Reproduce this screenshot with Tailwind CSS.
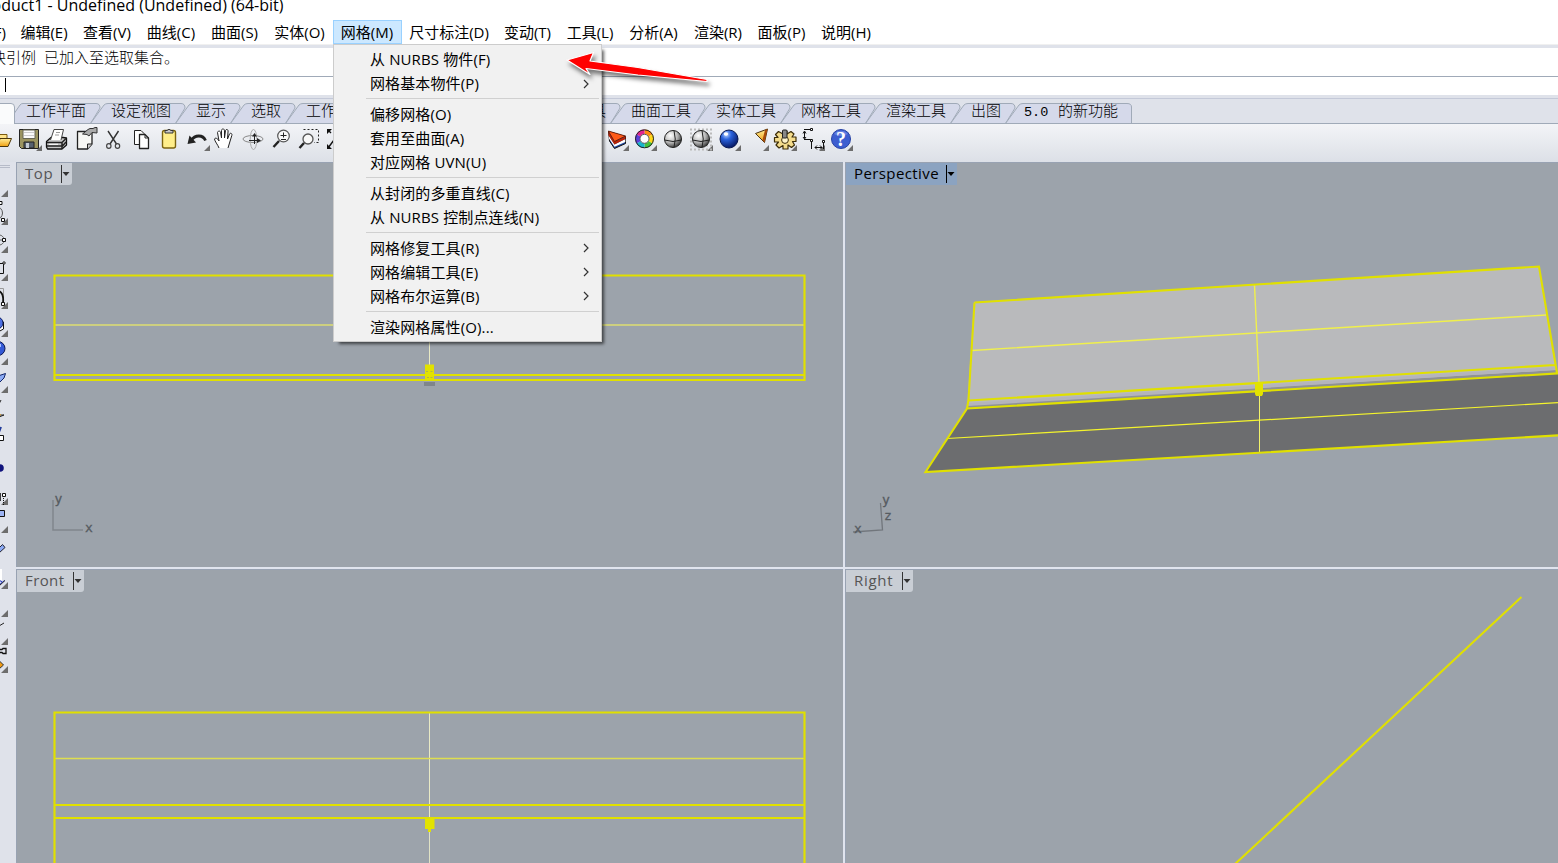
<!DOCTYPE html>
<html lang="zh">
<head>
<meta charset="utf-8">
<title>Product1 - Undefined</title>
<script src="https://cdn.jsdelivr.net/npm/@tailwindcss/browser@4"></script>
</head>
<body class="w-[1558px] h-[863px] overflow-hidden relative flex flex-col bg-white text-black font-['Open_Sans','Noto_Sans_CJK_SC',sans-serif] text-[15px]">

<!-- title -->
<header class="h-5 shrink-0 overflow-hidden flex items-start"><span class="-ml-[15px] -mt-[6px] leading-[22px] text-[16px] whitespace-nowrap">roduct1 - Undefined (Undefined) (64-bit)</span></header>

<!-- menu bar -->
<nav class="h-6 shrink-0 flex leading-[25px] text-[15px] whitespace-nowrap">
  <div class="w-[13px] flex justify-end pr-[7px]">(F)</div>
  <div class="w-[62px] text-center">编辑(E)</div>
  <div class="w-[64px] text-center">查看(V)</div>
  <div class="w-[64px] text-center">曲线(C)</div>
  <div class="w-[63px] text-center">曲面(S)</div>
  <div class="w-[67px] text-center">实体(O)</div>
  <div class="w-[69px] text-center bg-[#cce8ff] border border-[#99d1ff] leading-[23px] pr-px">网格(M)</div>
  <div class="w-[94px] text-center">尺寸标注(D)</div>
  <div class="w-[63px] text-center">变动(T)</div>
  <div class="w-[62px] text-center">工具(L)</div>
  <div class="w-[65px] text-center">分析(A)</div>
  <div class="w-[64px] text-center">渲染(R)</div>
  <div class="w-[63px] text-center">面板(P)</div>
  <div class="w-[66px] text-center">说明(H)</div>
</nav>

<!-- command area -->
<section class="h-[54px] shrink-0 flex flex-col font-['Liberation_Mono','Noto_Sans_CJK_SC',monospace]">
  <div class="h-1 bg-[#dfe2ea] border-t border-[#f0f0f0]"></div>
  <div class="h-7 leading-6 text-[15px] font-light whitespace-pre overflow-hidden"><span class="-ml-[9px]">块引例</span><span class="inline-block w-[8px]"></span>已加入至选取集合。</div>
  <div class="h-px bg-[#a0aab8]"></div>
  <div class="h-[18px] pl-[5px] pt-px"><div class="w-px h-[14px] bg-black"></div></div>
  <div class="h-[3px] bg-[#dfe2ea]"></div>
</section>

<!-- tabs -->
<section class="h-[26px] shrink-0 relative bg-[#dfe2ea]">
  <svg class="absolute inset-0" width="1558" height="26" fill="#d5d9ea" stroke="#a0aab8">
    <path d="M0 0.5H1558" stroke="#c4c9d8"/>
    <path d="M14.500 25.500V15L20 7Q21 5.500 23 5.500H96Q100 5.500 100 10L90.500 25.500Z"/>
    <path d="M90.500 25.500L104 7Q105.500 5.500 108 5.500H181Q185 5.500 185 10L175.500 25.500Z"/>
    <path d="M175.500 25.500L189 7Q190.500 5.500 193 5.500H236Q240 5.500 240 10L230.500 25.500Z"/>
    <path d="M230.500 25.500L244 7Q245.500 5.500 248 5.500H291Q295 5.500 295 10L285.500 25.500Z"/>
    <path d="M285.500 25.500L299 7Q300.500 5.500 303 5.500H616Q620 5.500 620 10L610.500 25.500Z"/>
    <path d="M610.500 25.500L624 7Q625.500 5.500 628 5.500H701Q705 5.500 705 10L695.500 25.500Z"/>
    <path d="M695.500 25.500L709 7Q710.500 5.500 713 5.500H786Q790 5.500 790 10L780.500 25.500Z"/>
    <path d="M780.500 25.500L794 7Q795.500 5.500 798 5.500H871Q875 5.500 875 10L865.500 25.500Z"/>
    <path d="M865.500 25.500L879 7Q880.500 5.500 883 5.500H956Q960 5.500 960 10L950.500 25.500Z"/>
    <path d="M950.500 25.500L964 7Q965.500 5.500 968 5.500H1011Q1015 5.500 1015 10L1005.500 25.500Z"/>
    <path d="M1005.500 25.500L1019 7Q1020.500 5.500 1023 5.500H1127Q1131.500 5.500 1131.500 9V25.500Z"/>
    <path d="M14 25.500H1558" />
    <path d="M-2 27V5.500H11Q14.500 5.500 14.500 9V27" fill="#fafbfc"/>
  </svg>
  <div class="relative flex pl-[26px] h-[26px] pt-[5px] leading-5 text-[15px] font-light whitespace-nowrap font-['Liberation_Mono','Noto_Sans_CJK_SC',monospace]">
    <span class="w-[85px]">工作平面</span><span class="w-[85px]">设定视图</span><span class="w-[55px]">显示</span><span class="w-[55px]">选取</span><span class="w-[240px]">工作</span><span class="w-[85px]">曲线工具</span><span class="w-[85px]">曲面工具</span><span class="w-[85px]">实体工具</span><span class="w-[85px]">网格工具</span><span class="w-[85px]">渲染工具</span><span class="w-[53px]">出图</span><span class="flex"><span class="w-[34px] text-[13.5px]">5.0</span>的新功能</span>
  </div>
</section>

<!-- toolbar -->
<section class="h-[38px] shrink-0 bg-linear-to-b from-[#f3f4f7] to-[#dce0e7]">
<svg width="900" height="38" viewBox="0 124 900 38" fill="none" stroke-linejoin="round">
  <defs>
    <radialGradient id="gb" cx=".35" cy=".25" r=".8"><stop offset="0" stop-color="#bcd4ff"/><stop offset=".35" stop-color="#2a62dd"/><stop offset="1" stop-color="#04135c"/></radialGradient>
    <radialGradient id="gg" cx=".35" cy=".3" r=".8"><stop offset="0" stop-color="#fff"/><stop offset=".5" stop-color="#bbb"/><stop offset="1" stop-color="#222"/></radialGradient>
    <linearGradient id="gy" x1="0" y1="0" x2="0" y2="1"><stop offset="0" stop-color="#ffee9a"/><stop offset="1" stop-color="#f0a010"/></linearGradient>
  </defs>
  <g fill="#6d6d6d">
    <path d="M42 145v6h-6zM210 145v6h-6zM629 145v6h-6zM657 145v6h-6zM713 145v6h-6zM741 145v6h-6zM769 145v6h-6zM797 145v6h-6zM825 145v6h-6zM853 145v6h-6z"/>
  </g>
  <!-- open -->
  <path d="M-3 146V134.500H7V138" fill="#ffe48a" stroke="#7a5a10"/><path d="M-2 146.500H8L11.500 138.500H0Z" fill="url(#gy)" stroke="#4a3508"/>
  <!-- save -->
  <path d="M19.500 129.500H38.500V148.500H21.500L19.500 146.500Z" fill="#9b9460" stroke="#222"/><path d="M23 130H35V138.500H23Z" fill="#fafafa" stroke="#665"/><path d="M24 132.500H34M24 135.500H34" stroke="#ccc"/><path d="M24 142H34V148H24Z" fill="#56606e" stroke="#222"/><path d="M26 143h3v5h-3z" fill="#c4cbd4"/>
  <!-- print -->
  <path d="M46.500 141.500L51 137.500H63L66.500 138V145L62 149H47.500L46.500 147Z" fill="#c8c8c8" stroke="#111" stroke-width="1.300"/><path d="M50.500 140L54 129.500H63.500L61 140" fill="#fff" stroke="#444"/><path d="M56 132.500H60M55 135H59" stroke="#999"/><path d="M47 142.500H62L66 138.500M47 146H62.500L66 142M62 142V149" stroke="#222" stroke-width="1.500"/><path d="M49 144.300H58" stroke="#fff"/>
  <!-- document properties -->
  <path d="M77.500 131.500H92V144L87.500 149H77.500Z" fill="#f7f7f4" stroke="#222" stroke-width="1.300"/><path d="M87.500 149V144H92" stroke="#222" fill="#ccc"/><path d="M82.500 134L88 129.500L90 128.500H93L95 127.500H97V133L92 132.500L89 136L87 134.500Z" fill="#aaa" stroke="#333"/>
  <!-- cut -->
  <path d="M108 131L116.500 144M118.500 131L110 144" stroke="#333" stroke-width="1.400"/><ellipse cx="108.800" cy="146" rx="2.200" ry="2.300" stroke="#444" stroke-width="1.200"/><ellipse cx="117.500" cy="146" rx="2.200" ry="2.300" stroke="#444" stroke-width="1.200"/>
  <!-- copy -->
  <path d="M134.500 130.500H141L144 133.500V144.500H134.500Z" fill="#fff" stroke="#222"/><path d="M139.500 134.500H145L148.500 138V148.500H139.500Z" fill="#fff" stroke="#222" stroke-width="1.300"/><path d="M145 134.500V138H148.500" stroke="#222"/>
  <!-- paste -->
  <rect x="162.500" y="130.500" width="13" height="17.500" rx="2" fill="#ffee8a" stroke="#7c6410" stroke-width="1.400"/><path d="M165 133V130.500H167Q169 128 171 130.500H173V133Z" fill="#c9c9c9" stroke="#333"/>
  <!-- undo -->
  <path d="M191 140.500C195 134.500 203 134.500 205.500 140.500" stroke="#222" stroke-width="2.800"/><path d="M187.500 144L189.500 135.500L196 142.500Z" fill="#222"/>
  <!-- pan -->
  <path d="M219 148C218 145 214.500 141 214.500 139C215.500 137 218 139 219 141L217.500 132.500C218.500 130 220.500 131 220.700 133L221.500 138V130.500C222 128 224.500 128.500 224.500 131V138L225.500 130.500C226.500 128.500 228.500 129.500 228 132L227.500 139L229.500 134C230.500 132.500 232.500 133.500 231.800 135.500L229.500 143L228 148" fill="#fff" stroke="#222"/>
  <!-- rotate view -->
  <ellipse cx="253" cy="139" rx="10" ry="3.500" stroke="#8a8a8a"/><ellipse cx="253.500" cy="139.500" rx="3.300" ry="10" stroke="#aaa"/><path d="M249 140.500H259M254.500 134V144" stroke="#222"/><path d="M257 138L261 140.500L257 143ZM252 136.500L254.500 133L257 136.500Z" fill="#222"/>
  <!-- zoom -->
  <circle cx="283.500" cy="136" r="5.800" fill="#f8f8f8" stroke="#555" stroke-width="1.200"/><path d="M280.500 135.500H286.500M283.500 132.500V137.500M281 139.500H286" stroke="#222"/><path d="M279 141L273.500 147" stroke="#222" stroke-width="2.400"/>
  <!-- zoom window -->
  <path d="M303.500 129.500H318.500V142.500H314" stroke="#222" stroke-dasharray="2 2"/><circle cx="308" cy="139" r="5" fill="#f8f8f8" stroke="#555" stroke-width="1.300"/><path d="M304 143L299.500 148" stroke="#222" stroke-width="2.400"/>
  <!-- zoom extents -->
  <path d="M327 129H332L327 134ZM327 149V144L332 149Z" fill="#111"/><path d="M328 148L334 140M328 130L331 133" stroke="#111" stroke-width="1.400"/>
  <!-- layers -->
  <path d="M608.500 131.500L625.500 136.500V143.500L614.500 148.500L609.500 141Z" fill="#1f4aa8" stroke="#111"/><path d="M608.800 135.500L614.500 144.500L625.300 139V142L614.500 146.800L609 138.500Z" fill="#fff"/><path d="M608.500 131.500L614.500 141.500L625.500 136.500V139L614.500 144.500L608.500 135.500Z" fill="#b92408"/><path d="M608.300 131L625.500 136L614.500 141.500Z" fill="#ff5a18" stroke="#5c1606" stroke-width=".8"/>
  <!-- colour wheel -->
  <g stroke-width="4.500"><path d="M644.500 131.800A7 7 0 0 1 650.560 135.300" stroke="#ff8a10"/><path d="M650.560 135.300A7 7 0 0 1 650.560 142.300" stroke="#ffd818"/><path d="M650.560 142.300A7 7 0 0 1 644.500 145.800" stroke="#44c33c"/><path d="M644.500 145.800A7 7 0 0 1 638.440 142.300" stroke="#18b5cc"/><path d="M638.440 142.300A7 7 0 0 1 638.440 135.300" stroke="#5a3fd8"/><path d="M638.440 135.300A7 7 0 0 1 644.500 131.800" stroke="#e02590"/></g><circle cx="644.500" cy="138.800" r="9" stroke="#222"/><circle cx="644.500" cy="138.800" r="4.500" stroke="#333" fill="#fff" stroke-width=".8"/>
  <!-- shaded spheres -->
  <circle cx="673" cy="139" r="8.500" fill="url(#gg)" stroke="#222"/><path d="M664.500 140Q673 143 681.500 140M674 130.500Q676.500 139 674 147.500" stroke="#222"/>
  <path d="M690 129.500H712M690 133.500H712M690 137.500H712M690 141.500H712M690 145.500H712M690 149.500H712" stroke="#bbb" stroke-width="2" stroke-dasharray="2 2"/><circle cx="701" cy="139" r="8.500" fill="url(#gg)" stroke="#222"/><path d="M692.500 140Q701 143 709.500 140M702 130.500Q704.500 139 702 147.500" stroke="#222"/>
  <circle cx="729" cy="139" r="9" fill="url(#gb)" stroke="#081850"/><ellipse cx="726" cy="134" rx="2.200" ry="1.800" fill="#fff"/>
  <!-- light -->
  <path d="M755.500 133.500L767.500 129L764.500 142.500Z" fill="url(#gy)" stroke="#4b3410"/><path d="M765 130L767.500 129L764.500 142.500L762.500 140Z" fill="#a84b09"/>
  <!-- options gear -->
  <path d="M783 131H787V134L791 131.500L794 134L792 137H796V141.500H792.500L794.500 145L791.500 147.500L788 145V149H783V145.500L779 148L776 145L778.500 142H774.500V137.500H778L775.500 134.500L778.500 131.500L783 134Z" fill="#f4dc8c" stroke="#3c2d08" stroke-width="1.200"/><circle cx="785" cy="140" r="3.400" fill="#fff5cc" stroke="#3c2d08"/><rect x="782.500" y="130" width="4.500" height="8" rx="1" fill="#888" stroke="#222"/>
  <!-- dimensions -->
  <path d="M804 129.500H811M804.500 132V138M804 139.500H811.500V149M803 133.500L804.500 131L806 133.500M803 137L804.500 139L806 137M815 147.500H822M817 145.500L815 147.500L817 149.500M820 145.500L822 147.500L820 149.500M823.500 143V149" stroke="#111"/><path d="M810.500 128.500h2v2h-2zM810.500 139.500h2v2h-2zM822.500 140.500h2v2h-2z" stroke="#111" fill="#fff"/>
  <!-- help -->
  <circle cx="841" cy="139" r="9.500" fill="#3d5ed0" stroke="#2742a5"/><path d="M834 134A9 9 0 0 1 848 134Q841 138 834 134Z" fill="#7f9aef" opacity=".6"/>
  <text x="841" y="146" text-anchor="middle" fill="#fff" font-family="Liberation Serif" font-weight="bold" font-size="20">?</text>
</svg>
</section>

<!-- work area -->
<main class="flex-1 min-h-0 flex">
  <aside class="w-4 shrink-0 bg-[#dfe2ea]">
  <svg width="16" height="701" viewBox="0 162 16 701" fill="none">
    <path d="M0 165.500H10M0 167.500H10" stroke="#b6bbc8"/>
    <path fill="#6d6d6d" d="M8 190v7H1zM8 218v7H1zM8 246v7H1zM8 274v7H1zM8 302v7H1zM8 330v7H1zM8 358v7H1zM8 386v7H1zM8 498v7H1zM8 526v7H1zM8 582v7H1zM8 610v7H1zM8 638v7H1zM8 666v7H1z"/>
    <circle cx="-4" cy="213" r="6.500" stroke="#555"/><path d="M-1 201.500h3v3h-3zM1.500 218.500h3v3h-3z" fill="#fff" stroke="#111"/>
    <path d="M-3 235Q3 234 4.500 240Q3 246 -3 245M-2 240H4" stroke="#666"/><path d="M2.500 238.500h3v3h-3z" fill="#fff" stroke="#111"/>
    <path d="M-2 263.500H3.500V273.500H-2" stroke="#111"/><circle cx="4" cy="263" r="1.200" fill="#fff" stroke="#111"/>
    <path d="M-2 288.500H3.500V303" stroke="#999"/><path d="M-1 291Q4 293 3 303" stroke="#111" stroke-width="1.800"/><path d="M1.500 302.500h3v3h-3z" fill="#fff" stroke="#111"/>
    <path d="M-4 317L3.500 322V329L-2 332" fill="#fff" stroke="#111"/><circle cx="-3" cy="323" r="6" fill="#4c6fe2" stroke="#0b1c60"/>
    <circle cx="-2" cy="348.500" r="7" fill="#3459d6" stroke="#0a1650"/><path d="M0 344v3" stroke="#a8c1ff" stroke-width="2"/>
    <path d="M-2 376L5.500 373.500L4 378L-1 383Z" fill="#8cabf5" stroke="#10246a"/>
    <path d="M-1 404L1 400M-1 415H4L-1 417" stroke="#222"/><path d="M-1 414L1 415" stroke="#e8a020"/>
    <path d="M-1 432L1 427" stroke="#223c9c" stroke-width="2"/><path d="M-2 435.500H3.500V440.500H-2" fill="#fff" stroke="#111"/>
    <circle cx="0" cy="468" r="3.800" fill="#10127c"/>
    <path d="M0 493V501" stroke="#111" stroke-width="1.600"/><path d="M2.500 493.500h3v3h-3z" fill="#fff" stroke="#111"/><path d="M3.500 498V505" stroke="#111" stroke-dasharray="1 1"/>
    <path d="M-2 510.500H4.500V516.500H-2Z" fill="#9db4f4" stroke="#111"/>
    <path d="M-3 550L2.500 544.500L5 547.500L-1 553Z" fill="#8cabf5" stroke="#223"/>
    <path d="M-1 569H2V580H-1Z" fill="#fff"/><path d="M-1 585L4.500 580.500M-1 580L2 582" stroke="#1b2cc4"/><path d="M-1 586L5 580.500" stroke="#222"/>
    <path d="M-1 626L4 623" stroke="#222"/><path d="M0 649.500H2L3 648.500H6V653.500H3L2 652.500H0" stroke="#111" stroke-width="1.300"/>
    <path d="M-1 660.500L3.500 665L-1 669Z" fill="#f09a12" stroke="#333"/>
  </svg>
  </aside>
  <div class="flex-1 grid grid-cols-[828px_1fr] grid-rows-[406px_1fr] bg-[#e0e4ee]">
    <!-- Top -->
    <section class="relative mr-[1px] mb-[1px] bg-[#9ca3ab] border-l border-t border-[#98a2b2] overflow-hidden">
      <div class="h-[22px] w-[55px] flex bg-[#c9ced5] rounded-br-[3px] text-[#555] text-[15px] leading-[21px]"><span class="w-[44px] shrink-0 pl-2 tracking-[.6px]">Top</span><svg width="10" height="22" class="shrink-0"><path d="M.5 2V20" stroke="#333"/><path d="M1.500 9h7l-3.500 4z" fill="#333"/></svg></div>
      <svg class="absolute inset-0" width="826" height="404" viewBox="17 163 826 404" fill="none" stroke="#e0e000">
        <path d="M54 325H805" stroke="#dede70" stroke-width="1.500"/><path d="M429.500 275V366" stroke="#e9eac5"/>
        <path d="M54.500 275.500H804.500V380H54.500ZM54.500 375H804.500" stroke-width="2.200"/>
        <path d="M424 382H435V386H424Z" fill="#7f858b" stroke="none"/>
        <path d="M425 364.500H434V380H425Z" fill="#e2e200" stroke="none"/><path d="M426 371.500h2m2.500 0h2M427 377.500h2m1.500 0h2" stroke="#b0b448"/>
        <path d="M53 500V530H83" stroke="#80868d" stroke-width="1.500"/>
        <g fill="#565b61" stroke="#565b61" stroke-width=".3" font-family="DejaVu Sans Mono" font-size="13"><text x="54.500" y="503">y</text><text x="85" y="532">x</text></g>
      </svg>
    </section>
    <!-- Perspective -->
    <section class="relative ml-[1px] mb-[1px] bg-[#9ca3ab] border-t border-l border-[#98a2b2] overflow-hidden">
      <div class="h-[22px] w-[111px] flex bg-[#8ba3c1] text-black text-[15px] leading-[21px]"><span class="w-[100px] shrink-0 pl-2 tracking-[.4px]">Perspective</span><svg width="10" height="22" class="shrink-0"><path d="M.5 2V20" stroke="#000"/><path d="M1.500 9h7l-3.500 4z" fill="#000"/></svg></div>
      <svg class="absolute inset-0" width="712" height="404" viewBox="846 163 712 404" fill="none" stroke="#e0e000">
        <path d="M974 302L1539 266L1557 373L967 408Z" fill="#b9babc" stroke="none"/>
        <path d="M967 405L1556 370V374L967 409Z" fill="#8f9194" stroke="none"/>
        <path d="M969 403L1556 367V370L968 406Z" fill="#b4b4bc" stroke="none"/>
        <path d="M967 409L1560 373.500V435.500L925 472Z" fill="#6c6d6f" stroke="none"/>
        <path d="M972 350.500L1546 315M1254.500 285L1259 383" stroke="#f0f04c" stroke-width="1.400"/>
        <path d="M947 438.500L1560 402.500" stroke="#f4f42c" stroke-width="1.200"/><path d="M1259.500 393V453" stroke="#f2f26a"/>
        <path d="M974.500 302.500L1539 266.500L1557 373M974.500 302.500L968.500 400L967 408.500L925.500 472L1560 435.300M968.500 400.500L1555 365M967 408.500L1560 373.300" stroke-width="2.100"/>
        <path d="M1255 382H1263V394L1262 396H1256L1255 394Z" fill="#e2e200" stroke="none"/>
        <path d="M880.500 503L882.500 530L853 532" stroke="#71767c" stroke-width="1.300"/>
        <g fill="#565b61" stroke="#565b61" stroke-width=".3" font-family="DejaVu Sans Mono" font-size="13"><text x="882" y="504">y</text><text x="884" y="520">z</text><text x="854" y="533">x</text></g>
      </svg>
    </section>
    <!-- Front -->
    <section class="relative mr-[1px] mt-[1px] bg-[#9ca3ab] border-l border-t border-[#98a2b2] overflow-hidden">
      <div class="h-[22px] w-[67px] flex bg-[#c9ced5] rounded-br-[3px] text-[#555] text-[15px] leading-[21px]"><span class="w-[56px] shrink-0 pl-2 tracking-[.4px]">Front</span><svg width="10" height="22" class="shrink-0"><path d="M.5 2V20" stroke="#333"/><path d="M1.500 9h7l-3.500 4z" fill="#333"/></svg></div>
      <svg class="absolute inset-0" width="826" height="293" viewBox="17 570 826 293" fill="none" stroke="#e0e000">
        <path d="M429.500 712V818" stroke="#e9eac5"/><path d="M429.500 831V863" stroke="#e0e2c5"/><path d="M54 758.500H805" stroke="#dede50" stroke-width="1.500"/>
        <path d="M54.500 870V712.500H804.500V870M54.500 805H804.500M54.500 818H804.500" stroke-width="2.200"/>
        <path d="M425 819H434.500V829H431V832H428V829H425Z" fill="#e2e200" stroke="none"/>
      </svg>
    </section>
    <!-- Right -->
    <section class="relative ml-[1px] mt-[1px] bg-[#9ca3ab] border-t border-l border-[#98a2b2] overflow-hidden">
      <div class="h-[22px] w-[67px] flex bg-[#c9ced5] rounded-br-[3px] text-[#555] text-[15px] leading-[21px]"><span class="w-[56px] shrink-0 pl-2 tracking-[.7px]">Right</span><svg width="10" height="22" class="shrink-0"><path d="M.5 2V20" stroke="#333"/><path d="M1.500 9h7l-3.500 4z" fill="#333"/></svg></div>
      <svg class="absolute inset-0" width="712" height="293" viewBox="846 570 712 293" fill="none"><path d="M1521.500 597L1234 865" stroke="#e0e000" stroke-width="2.100"/></svg>
    </section>
  </div>
</main>

<!-- mesh menu -->
<div class="absolute left-[333px] top-[44px] w-[269px] h-[298px] bg-[#f1f1f1] border border-[#ccc] shadow-[4px_4px_3px_-2px_rgba(0,0,0,0.6)] pt-[3px] pl-[36px] text-[15px] leading-[22px] tracking-[.12px] whitespace-nowrap">
  <div class="h-6">从 NURBS 物件(F)</div>
  <div class="h-6 flex justify-between items-start pr-3">网格基本物件(P)<svg width="6" height="10" class="mt-[7px]" fill="none" stroke="#333" stroke-width="1.200"><path d="M1 1l4 4-4 4"/></svg></div>
  <div class="-ml-1 mr-[2px] mt-[2px] mb-1 h-px bg-[#d0d0d0]"></div>
  <div class="h-6">偏移网格(O)</div>
  <div class="h-6">套用至曲面(A)</div>
  <div class="h-6">对应网格 UVN(U)</div>
  <div class="-ml-1 mr-[2px] mt-[2px] mb-1 h-px bg-[#d0d0d0]"></div>
  <div class="h-6">从封闭的多重直线(C)</div>
  <div class="h-6">从 NURBS 控制点连线(N)</div>
  <div class="-ml-1 mr-[2px] mt-[2px] mb-1 h-px bg-[#d0d0d0]"></div>
  <div class="h-6 flex justify-between items-start pr-3">网格修复工具(R)<svg width="6" height="10" class="mt-[6px]" fill="none" stroke="#333" stroke-width="1.200"><path d="M1 1l4 4-4 4"/></svg></div>
  <div class="h-6 flex justify-between items-start pr-3">网格编辑工具(E)<svg width="6" height="10" class="mt-[6px]" fill="none" stroke="#333" stroke-width="1.200"><path d="M1 1l4 4-4 4"/></svg></div>
  <div class="h-6 flex justify-between items-start pr-3">网格布尔运算(B)<svg width="6" height="10" class="mt-[6px]" fill="none" stroke="#333" stroke-width="1.200"><path d="M1 1l4 4-4 4"/></svg></div>
  <div class="-ml-1 mr-[2px] mt-[2px] mb-1 h-px bg-[#d0d0d0]"></div>
  <div class="h-6">渲染网格属性(O)...</div>
</div>

<!-- red pointer arrow -->
<svg class="absolute left-[558px] top-[45px] drop-shadow-[2px_4px_2px_rgba(0,0,0,0.5)]" width="160" height="50" viewBox="560 45 160 50"><path d="M569 60L595.500 52.500L592 61L640 67.500L709 79.500V81.500L640 75L588 68.500L592 74.500Z" fill="#f00" stroke="#fff" stroke-width="1.200" stroke-linejoin="round"/></svg>
</body>
</html>
